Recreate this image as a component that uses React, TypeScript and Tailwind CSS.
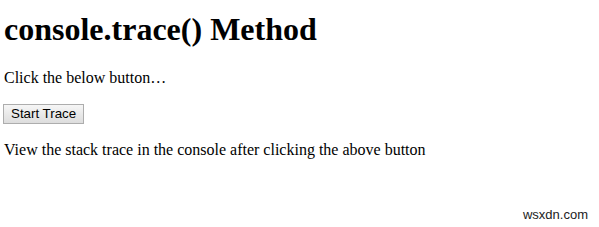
export default function App() {
  return (
    <main className="relative min-h-[227px] bg-white text-black pl-[4px] pt-[11px]" style={{ fontFamily: '"Liberation Serif", "Times New Roman", serif' }}>
      <h1 className="text-[32px] font-bold leading-[37px]">console.trace() Method</h1>
      <p className="mt-[21px] text-[16px] leading-[18px]">Click the below button…</p>
      <button
        className="mt-[17px] -ml-[1px] block h-[20px] px-[7px] border border-[#adadad] bg-gradient-to-b from-[#f6f6f6] to-[#dddddd] text-[13.33px] leading-[16px] text-black"
        style={{ fontFamily: '"Liberation Sans", Arial, sans-serif' }}
      >
        Start Trace
      </button>
      <p className="mt-[17px] text-[16px] leading-[18px]">View the stack trace in the console after clicking the above button</p>
      <span
        className="absolute right-[11px] top-[205px] text-[13px] text-[#222]"
        style={{ fontFamily: '"Liberation Sans", Arial, sans-serif' }}
      >
        wsxdn.com
      </span>
    </main>
  )
}
